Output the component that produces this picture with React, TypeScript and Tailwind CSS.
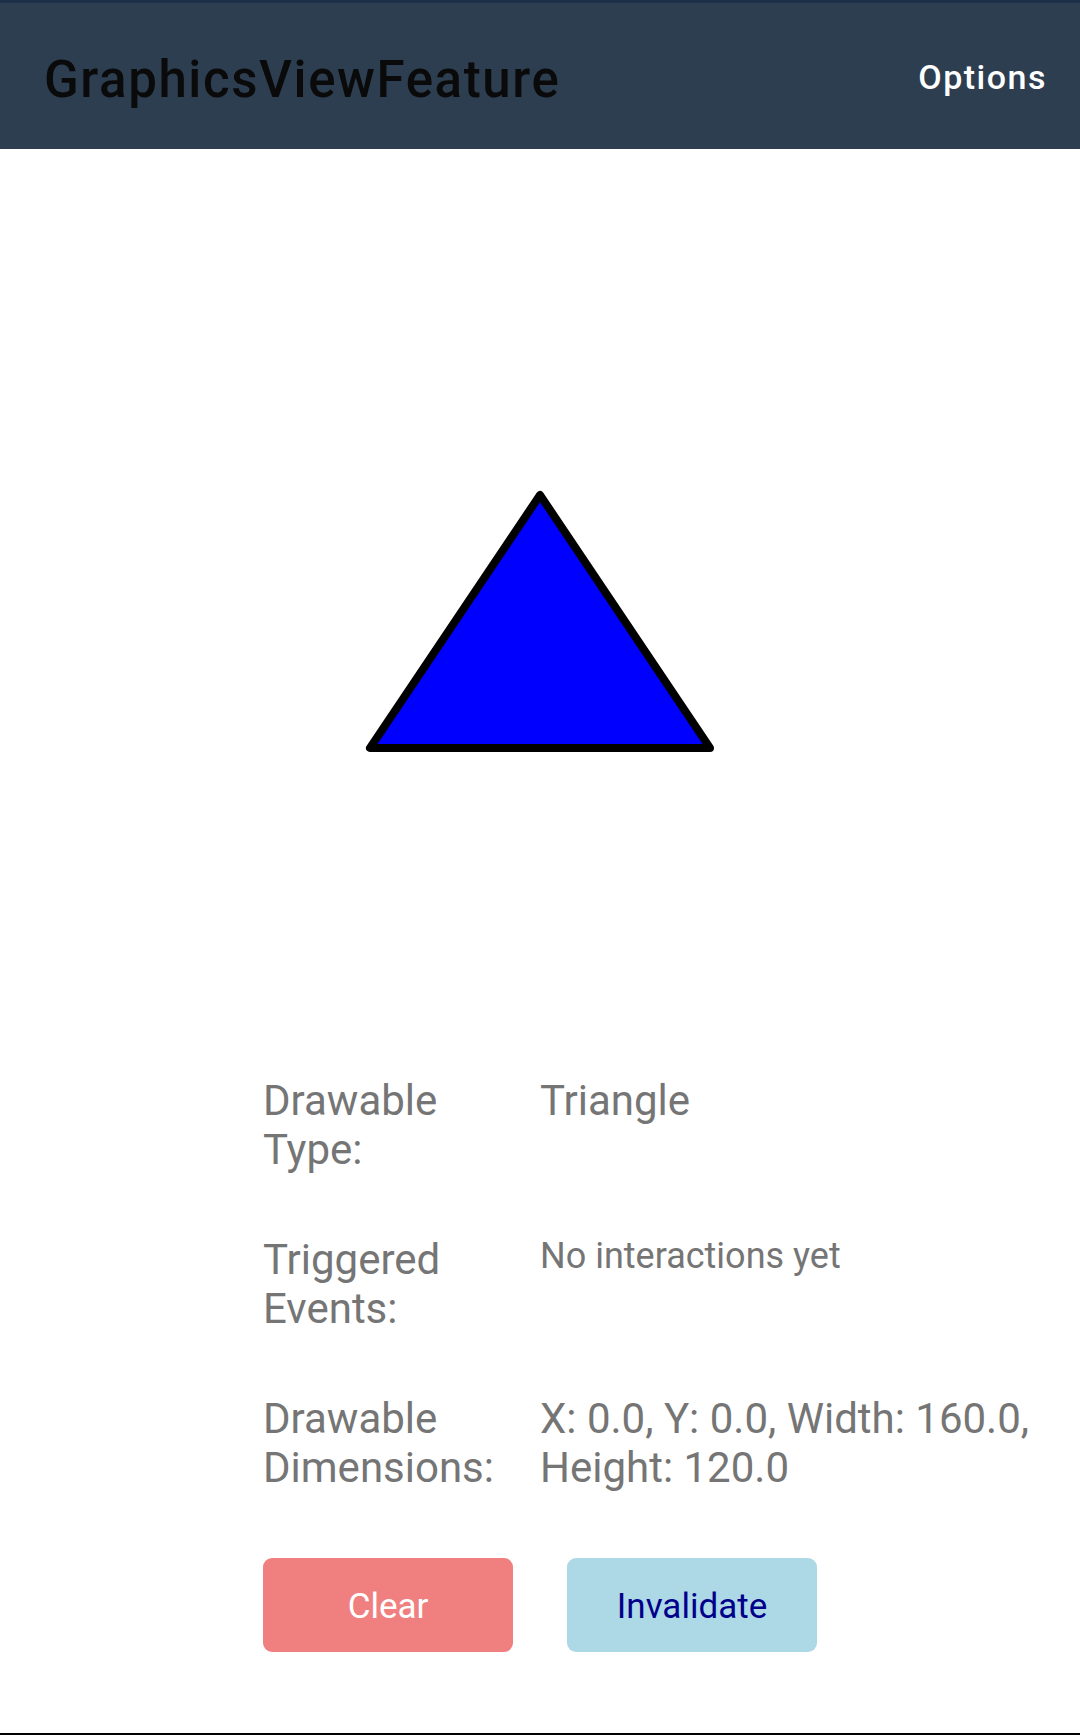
import React from "react";

// 信息行
const InfoRow = ({ label, value, small }: { label: string; value: string; small?: boolean }) => (
  <div className="flex">
    <div className="w-[277px] pr-[30px] text-[42px] leading-[49px]">{label}</div>
    <div
      className={
        small
          ? "flex-1 pr-[20px] text-[36px] leading-[42px]"
          : "flex-1 pr-[20px] text-[42px] leading-[49px]"
      }
    >
      {value}
    </div>
  </div>
);

export default function App() {
  return (
    <div className="flex h-[1735px] flex-col bg-white font-['Roboto',sans-serif]">
      {/* 标题栏 */}
      <div className="flex h-[149px] items-start justify-between border-t-[3px] border-[#1c3047] bg-[#2c3e50] pl-[44px] pr-[33px]">
        <div className="mt-[47px] text-[51px] font-medium leading-[60px] tracking-[1.6px] text-[#0a0a0a]">
          GraphicsViewFeature
        </div>
        <div className="mt-[54px] text-[34px] font-medium leading-[40px] tracking-[1.5px] text-white">
          Options
        </div>
      </div>

      {/* 画布 */}
      <div className="flex h-[927px] justify-center pt-[340px]">
        <svg width="352" height="265" viewBox="0 0 352 265">
          <polygon
            points="176,6 6,259 346,259"
            fill="#0000ff"
            stroke="#000"
            strokeWidth="8"
            strokeLinejoin="round"
          />
        </svg>
      </div>

      {/* 信息 */}
      <div className="flex flex-col gap-[61px] pl-[263px] text-[#757575]">
        <InfoRow label="Drawable Type:" value="Triangle" />
        <InfoRow label="Triggered Events:" value="No interactions yet" small />
        <InfoRow label="Drawable Dimensions:" value="X: 0.0, Y: 0.0, Width: 160.0, Height: 120.0" />
      </div>

      {/* 按钮 */}
      <div className="mt-[66px] flex gap-[54px] pl-[263px]">
        <button className="h-[94px] w-[250px] rounded-[9px] bg-[#f08080] pt-[5px] text-[35px] text-white">
          Clear
        </button>
        <button className="h-[94px] w-[250px] rounded-[9px] bg-[#add8e6] pt-[5px] text-[35px] text-[#00008b]">
          Invalidate
        </button>
      </div>

      <div className="flex-1" />
      <div className="h-[2px] bg-black" />
    </div>
  );
}
